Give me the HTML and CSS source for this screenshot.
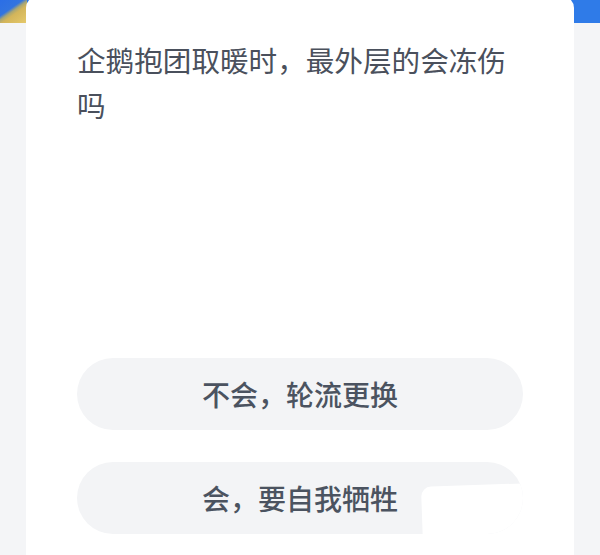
FILE: index.html
```html
<!DOCTYPE html>
<html lang="zh">
<head>
<meta charset="utf-8">
<title>企鹅抱团取暖</title>
<link rel="stylesheet" href="styles.css">
</head>
<body>
<div class="page">
  <div class="band"></div>
  <div class="card">
    <p class="question">企鹅抱团取暖时，最外层的会冻伤吗</p>
    <div class="options">
      <div class="option">不会，轮流更换</div>
      <div class="option">会，要自我牺牲<span class="patch"></span></div>
    </div>
  </div>
</div>
</body>
</html>
```
FILE: styles.css
```css
html, body {
  margin: 0;
  padding: 0;
}
body {
  background: #f4f5f7;
  font-family: "Noto Sans CJK SC", "Noto Sans", sans-serif;
}
.page {
  width: 600px;
  height: 555px;
  overflow: hidden;
  background: #f4f5f7;
}
.band {
  height: 23px;
  background:
    linear-gradient(145deg, #2b6ee6 0%, #3274e0 38%, #a8a674 48%, #d3b55a 58%, #e6ca6c 100%) left top / 27px 23px no-repeat,
    #2f7be8;
}
.card {
  margin: -27px 26px 0;
  height: 600px;
  background: #ffffff;
  border-radius: 12px 12px 0 0;
  padding: 41px 0 0 51px;
  box-sizing: border-box;
}
.question {
  margin: 0;
  width: 450px;
  font-size: 28.6px;
  line-height: 45px;
  color: #4a505c;
  font-weight: 400;
}
.options {
  margin-top: 231px;
  display: flex;
  flex-direction: column;
  gap: 32px;
}
.option {
  position: relative;
  overflow: hidden;
  width: 446px;
  height: 72px;
  border-radius: 36px;
  background: #f3f4f6;
  display: flex;
  align-items: center;
  justify-content: center;
  font-size: 28px;
  font-weight: 500;
  color: #4b5360;
}
.patch {
  position: absolute;
  left: 345px;
  top: 23px;
  width: 110px;
  height: 60px;
  background: #ffffff;
  border-radius: 10px 0 0 4px;
  transform: rotate(-2deg);
}
```
